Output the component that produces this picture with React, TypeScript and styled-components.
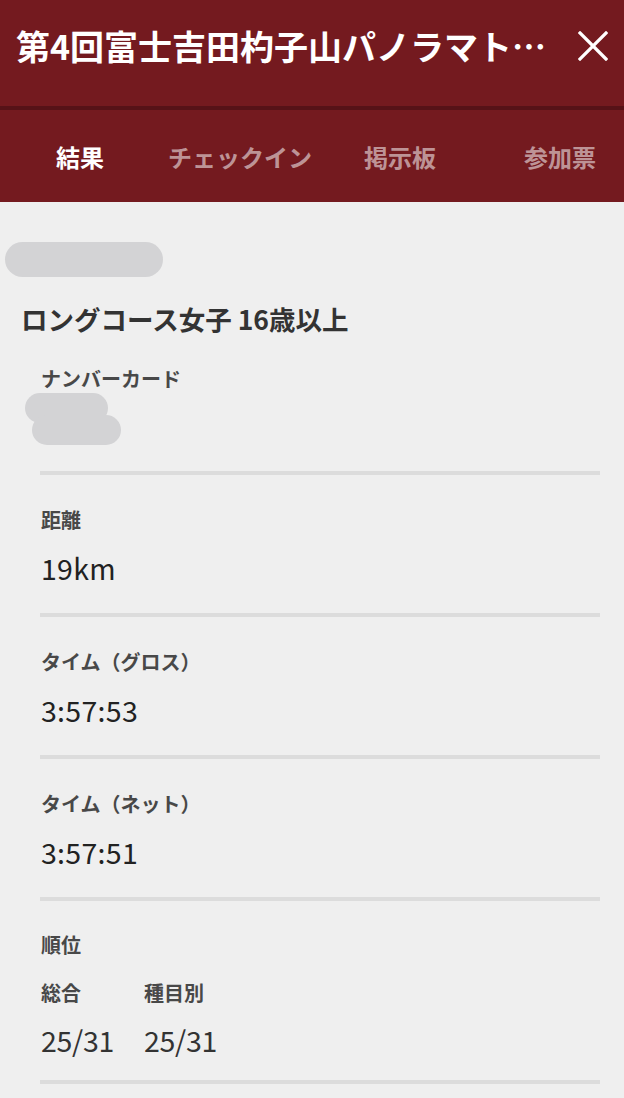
import React from 'react'
import styled, { createGlobalStyle } from 'styled-components'

const GlobalStyle = createGlobalStyle`
  html, body {
    margin: 0;
    padding: 0;
    background: #efefef;
    font-family: "Noto Sans CJK JP", "Noto Sans", sans-serif;
  }
`

const Page = styled.div`
  width: 624px;
  min-height: 1098px;
  background: #efefef;
  overflow: hidden;
`

// Header: title row + tab bar
const Header = styled.header`
  background: #741a1f;
  color: #fff;
`

const TitleRow = styled.div`
  height: 106px;
  box-sizing: border-box;
  padding: 0 14px 14px 16px;
  display: flex;
  align-items: center;
  justify-content: space-between;
`

const Title = styled.h1`
  margin: 0;
  font-size: 34px;
  font-weight: 700;
  line-height: 40px;
  white-space: nowrap;
`

const CloseButton = styled.button`
  width: 34px;
  height: 34px;
  padding: 0;
  border: none;
  background: transparent;
  display: flex;
  align-items: center;
  justify-content: center;
  color: #fff;
`

const TabBar = styled.nav`
  position: relative;
  height: 92px;
  border-top: 4px solid #561217;
  display: flex;
  overflow: hidden;
`

const Tab = styled.div<{ $active?: boolean }>`
  flex: 0 0 160px;
  display: flex;
  align-items: center;
  justify-content: center;
  font-size: 24px;
  font-weight: 700;
  color: ${(p) => (p.$active ? '#ffffff' : 'rgba(255, 255, 255, 0.55)')};
`

const Indicator = styled.span`
  position: absolute;
  top: -4px;
  left: 60px;
  width: 40px;
  height: 4px;
  background: #f3f3f3;
`

// Content
const Content = styled.main`
  padding: 40px 24px 0 0;
`

const Redact = styled.div<{ $w: number; $h: number; $ml: number; $mt?: number }>`
  width: ${(p) => p.$w}px;
  height: ${(p) => p.$h}px;
  margin-left: ${(p) => p.$ml}px;
  margin-top: ${(p) => p.$mt ?? 0}px;
  background: #d3d3d5;
  border-radius: ${(p) => p.$h / 2}px;
`

const CourseTitle = styled.h2`
  margin: 24px 0 0 21px;
  font-size: 26.5px;
  font-weight: 700;
  line-height: 36px;
  color: #333;
`

const Section = styled.section<{ $top?: number }>`
  margin-left: 40px;
  padding-top: ${(p) => p.$top ?? 31}px;
  border-bottom: 4px solid #dcdcdc;
`

const Label = styled.div`
  margin-left: 1px;
  font-size: 20px;
  font-weight: 700;
  line-height: 28px;
  color: #484848;
`

const Value = styled.div<{ $bottom?: number }>`
  margin: 14px 0 0 1px;
  padding-bottom: ${(p) => p.$bottom ?? 25}px;
  font-size: 28.5px;
  font-weight: 400;
  line-height: 40px;
  color: #222;
  letter-spacing: 0.3px;
`

const RankGrid = styled.div`
  display: grid;
  grid-template-columns: 103px 1fr;
  margin-top: 20px;
`

const RankCol = styled.div`
  display: flex;
  flex-direction: column;
`

const RankValue = styled(Value)`
  margin-top: 13px;
  padding-bottom: 20px;
  color: #333;
  letter-spacing: -0.3px;
`

const CloseIcon = () => (
  <svg width="30" height="30" viewBox="0 0 30 30" fill="none">
    <path d="M2 2 L28 28 M28 2 L2 28" stroke="#fff" strokeWidth="3.2" strokeLinecap="square" />
  </svg>
)

const tabs = ['結果', 'チェックイン', '掲示板', '参加票']

const rows = [
  { label: '距離', value: '19km' },
  { label: 'タイム（グロス）', value: '3:57:53' },
  { label: 'タイム（ネット）', value: '3:57:51' },
]

const App = () => {
  return (
    <>
      <GlobalStyle />
      <Page>
        <Header>
          <TitleRow>
            <Title>第4回富士吉田杓子山パノラマト…</Title>
            <CloseButton aria-label="閉じる">
              <CloseIcon />
            </CloseButton>
          </TitleRow>
          <TabBar>
            {tabs.map((t, i) => (
              <Tab key={t} $active={i === 0}>
                {t}
              </Tab>
            ))}
            <Indicator />
          </TabBar>
        </Header>

        <Content>
          <Redact $w={158} $h={35} $ml={5} />
          <CourseTitle>ロングコース女子 16歳以上</CourseTitle>

          <Section $top={28}>
            <Label>ナンバーカード</Label>
            <Redact $w={83} $h={30} $ml={-15} />
            <Redact $w={89} $h={30} $ml={-8} $mt={-8} />
            <div style={{ height: 26 }} />
          </Section>

          {rows.map((r) => (
            <Section key={r.label}>
              <Label>{r.label}</Label>
              <Value>{r.value}</Value>
            </Section>
          ))}

          <Section $top={30}>
            <Label>順位</Label>
            <RankGrid>
              <RankCol>
                <Label>総合</Label>
                <RankValue>25/31</RankValue>
              </RankCol>
              <RankCol>
                <Label>種目別</Label>
                <RankValue>25/31</RankValue>
              </RankCol>
            </RankGrid>
          </Section>
        </Content>
      </Page>
    </>
  )
}

export default App
